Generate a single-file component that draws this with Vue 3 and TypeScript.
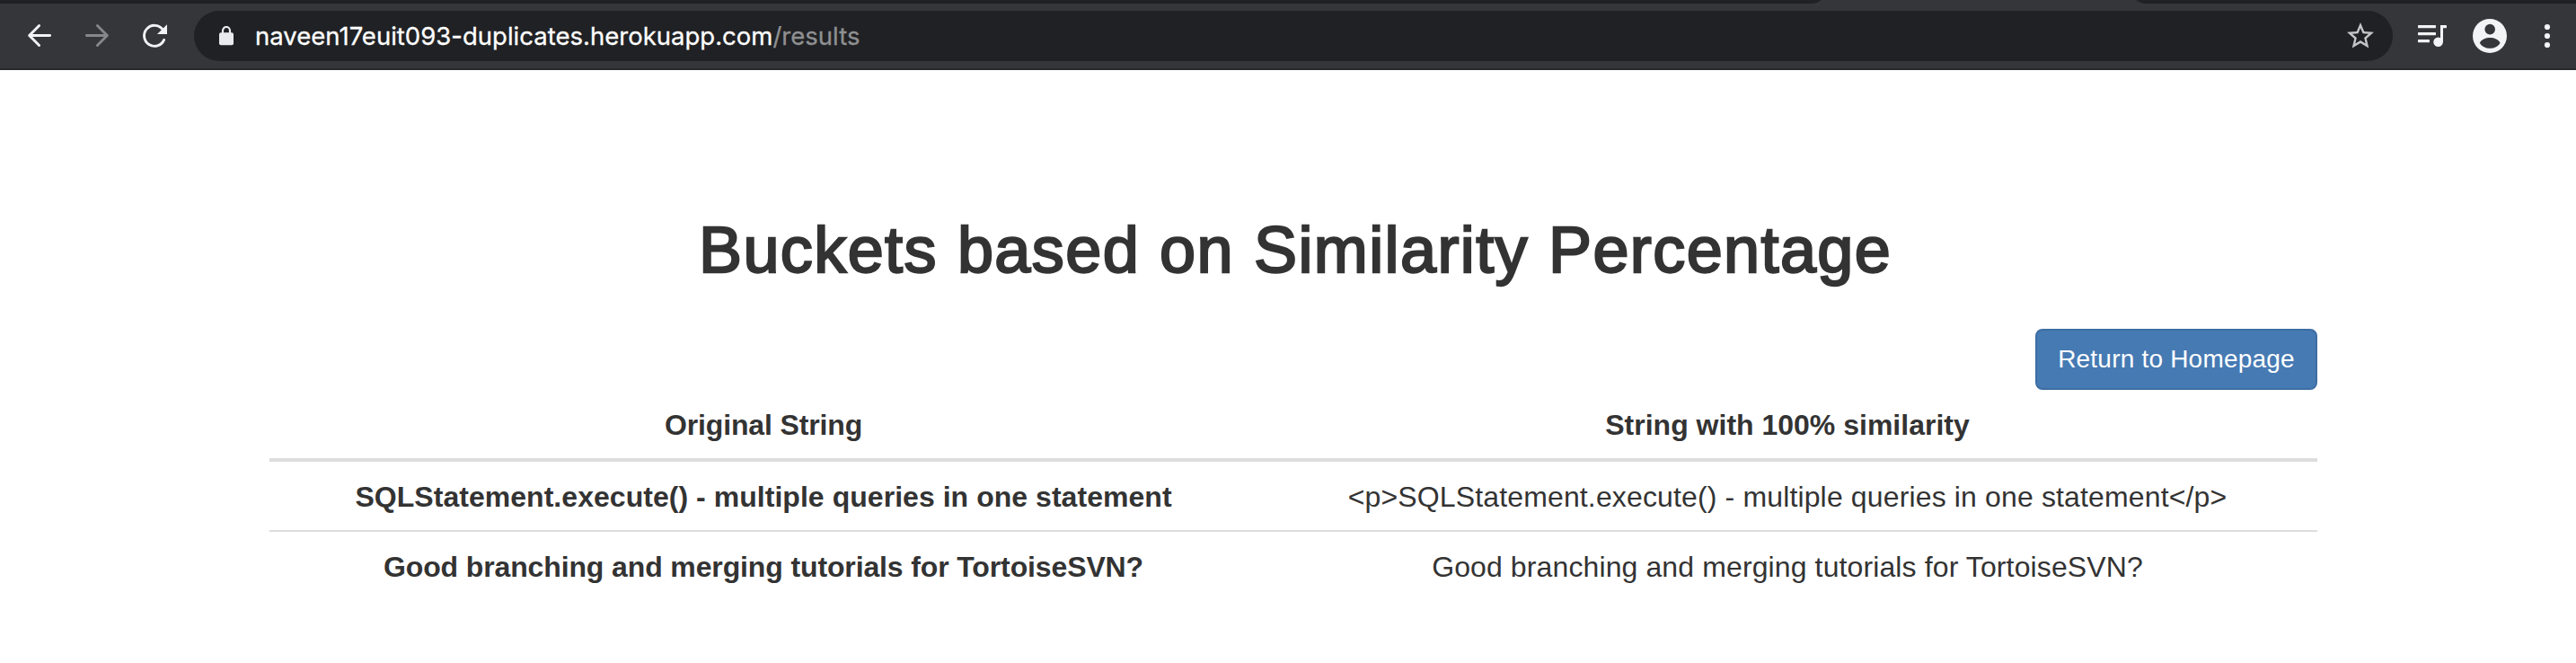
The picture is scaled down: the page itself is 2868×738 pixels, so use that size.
<script setup lang="ts">
interface Cell {
  text: string
  fit: string
}

interface Row {
  original: Cell
  match: Cell
}

const rows: Row[] = [
  {
    original: { text: 'SQLStatement.execute() - multiple queries in one statement', fit: 'fit-a' },
    match: { text: '<p>SQLStatement.execute() - multiple queries in one statement</p>', fit: 'fit-b' },
  },
  {
    original: { text: 'Good branching and merging tutorials for TortoiseSVN?', fit: 'fit-c' },
    match: { text: 'Good branching and merging tutorials for TortoiseSVN?', fit: 'fit-d' },
  },
]
</script>

<template>
  <div class="window">
    <header class="chrome">
      <div class="tab-strip">
        <span class="strip strip-left"></span>
        <span class="strip strip-right"></span>
      </div>
      <div class="toolbar">
        <svg class="nav" viewBox="0 0 32 32" aria-label="Back">
          <path d="M27.6 15.5H5M15.6 4.5L4.6 15.5l11 11" />
        </svg>
        <svg class="nav dim" viewBox="0 0 32 32" aria-label="Forward">
          <path d="M4.4 15.5H27M16.4 4.5l11 11l-11 11" />
        </svg>
        <svg class="nav reload" viewBox="0 0 32 32" aria-label="Reload">
          <path d="M26.6 20.4A11.5 11.5 0 1 1 25 8.6" />
          <path class="solid" d="M30 3.2V14H19z" />
        </svg>

        <div class="address">
          <svg class="lock" viewBox="0 0 16 22" aria-hidden="true">
            <rect x="0" y="7.2" width="16" height="14" rx="2" />
            <path d="M4 8V5a4 4 0 0 1 8 0v3" />
          </svg>
          <div class="url">naveen17euit093-duplicates.herokuapp.com<span class="path">/results</span></div>
          <svg class="star" viewBox="0 0 24 24" aria-label="Bookmark">
            <path
              d="M22 9.24l-7.19-.62L12 2 9.19 8.63 2 9.24l5.46 4.73L5.82 21 12 17.27 18.18 21l-1.63-7.03L22 9.24zM12 15.4l-3.76 2.27 1-4.28-3.32-2.88 4.38-.38L12 6.1l1.71 4.04 4.38.38-3.32 2.88 1 4.28L12 15.4z"
            />
          </svg>
        </div>

        <svg class="media" viewBox="0 0 32 32" aria-label="Media controls">
          <rect x="0" y="4" width="20" height="3.2" rx="0.6" />
          <rect x="0" y="12" width="20" height="3.2" rx="0.6" />
          <rect x="0" y="20" width="13" height="3.2" rx="0.6" />
          <path d="M25 4h6.4a.6.6 0 0 1 .6.6v2a.6.6 0 0 1-.6.6H28V23h-3z" />
          <circle cx="22.6" cy="22.8" r="5.3" />
        </svg>
        <svg class="avatar" viewBox="0 0 38 38" aria-label="Profile">
          <circle cx="19" cy="19" r="19" />
          <g class="cut">
            <circle cx="19.2" cy="11.6" r="5.8" />
            <path d="M7.8 26.8C9.5 23 14.6 21 19.2 21s9.7 2 11.4 5.8C28.2 30.8 24 32.8 19.2 32.8S10.2 30.8 7.8 26.8z" />
          </g>
        </svg>
        <svg class="more" viewBox="0 0 12 32" aria-label="Menu">
          <circle cx="6" cy="6" r="3.1" />
          <circle cx="6" cy="16" r="3.1" />
          <circle cx="6" cy="26" r="3.1" />
        </svg>
      </div>
    </header>

    <main class="page">
      <h1>Buckets based on Similarity Percentage</h1>
      <div class="actions">
        <button type="button" class="home">Return to Homepage</button>
      </div>
      <div class="table">
        <div class="row head">
          <div class="cell strong fit-head">Original String</div>
          <div class="cell strong">String with 100% similarity</div>
        </div>
        <div v-for="row in rows" :key="row.original.text" class="row">
          <div class="cell strong" :class="row.original.fit">{{ row.original.text }}</div>
          <div class="cell" :class="row.match.fit">{{ row.match.text }}</div>
        </div>
      </div>
    </main>
  </div>
</template>

<style>
body {
  margin: 0;
  background: #fff;
}
</style>

<style scoped>
.window {
  width: 2868px;
  height: 738px;
  overflow: hidden;
  background: #fff;
  color: #333;
  font-family: "Liberation Sans", Arial, sans-serif;
}

.chrome {
  box-sizing: border-box;
  height: 78px;
  background: #35363a;
  border-bottom: 2px solid #28292c;
}

.tab-strip {
  display: flex;
  align-items: flex-end;
  justify-content: space-between;
  height: 4px;
  overflow: hidden;
}

.strip {
  flex: none;
  height: 16px;
  background: #202124;
}

.strip-left {
  width: 2033px;
  border-bottom-right-radius: 16px;
}

.strip-right {
  width: 495px;
  border-bottom-left-radius: 16px;
}

.toolbar {
  display: flex;
  align-items: center;
  height: 72px;
  padding-left: 28px;
}

.toolbar svg {
  display: block;
  flex: none;
  fill: #f1f3f4;
}

.toolbar .nav {
  width: 32px;
  height: 32px;
  margin-right: 32px;
  fill: none;
  stroke: #f1f3f4;
  stroke-width: 2.9;
  stroke-linecap: round;
  stroke-linejoin: round;
}

.toolbar .dim {
  stroke: #86878a;
}

.toolbar .reload {
  margin-right: 28px;
}

.toolbar .reload .solid {
  fill: #f1f3f4;
  stroke: none;
}

.address {
  box-sizing: border-box;
  display: flex;
  align-items: center;
  width: 2448px;
  height: 56px;
  padding: 0 18px 0 28px;
  border-radius: 28px;
  background: #202124;
}

.address .lock {
  width: 16px;
  height: 22px;
  margin-right: 24px;
  fill: #e8eaed;
}

.lock path {
  fill: none;
  stroke: #e8eaed;
  stroke-width: 2.2;
}

.url {
  flex: 1;
  color: #fff;
  font-family: Inter, sans-serif;
  font-size: 27.5px;
  line-height: 56px;
  letter-spacing: 0.01px;
  white-space: nowrap;
  -webkit-text-stroke: 0.3px currentColor;
}

.path {
  color: #8f9092;
}

.address .star {
  width: 36px;
  height: 36px;
  fill: #c4c5c6;
}

.media {
  width: 32px;
  height: 32px;
  margin-left: 28px;
}

.avatar {
  width: 38px;
  height: 38px;
  margin-left: 29px;
}

.avatar .cut {
  fill: #35363a;
}

.more {
  width: 12px;
  height: 32px;
  margin-left: 39px;
}

.page {
  width: 2280px;
  margin-left: 300px;
  padding-top: 161px;
}

h1 {
  margin: 0 0 48px;
  padding-left: 478px;
  font-size: 72px;
  font-weight: 400;
  line-height: 79px;
  letter-spacing: 1.4px;
  word-spacing: 0.6px;
  white-space: nowrap;
  -webkit-text-stroke: 2.3px #333;
}

.actions {
  display: flex;
  justify-content: flex-end;
}

.home {
  box-sizing: border-box;
  width: 314px;
  height: 68px;
  padding: 0;
  border: 2px solid #3e6ea3;
  border-radius: 8px;
  background: #467ab3;
  color: #fff;
  font-family: inherit;
  font-size: 28px;
  line-height: 64px;
  letter-spacing: 0.21px;
  text-align: center;
  white-space: nowrap;
}

.row {
  display: grid;
  grid-template-columns: 1100px 1180px;
}

.head {
  border-bottom: 4px solid #ddd;
}

.row:not(.head) + .row {
  border-top: 2px solid #ddd;
}

.cell {
  height: 74px;
  padding-top: 2px;
  font-size: 32px;
  line-height: 74px;
  text-align: center;
  white-space: nowrap;
}

.strong {
  font-weight: 700;
}

.fit-head {
  letter-spacing: -0.14px;
}

.fit-a {
  letter-spacing: 0.04px;
}

.fit-b {
  letter-spacing: 0.142px;
}

.fit-c {
  letter-spacing: -0.127px;
}

.fit-d {
  letter-spacing: 0.115px;
}
</style>
